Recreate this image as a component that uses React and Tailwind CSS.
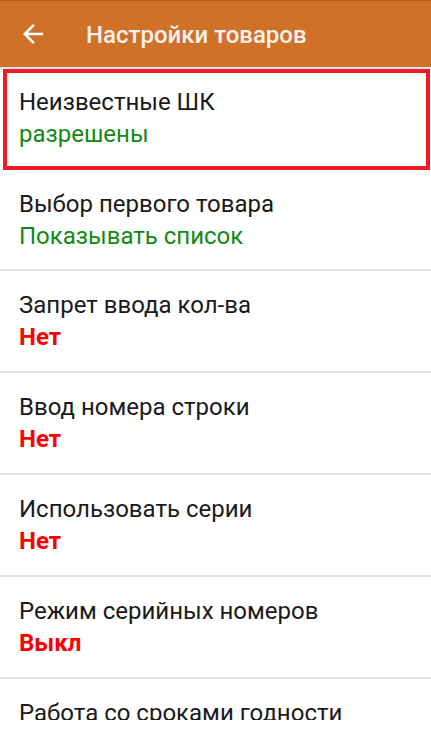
import React from 'react';

const settings = [
  { title: 'Неизвестные ШК', value: 'разрешены', tone: 'ok' },
  { title: 'Выбор первого товара', value: 'Показывать список', tone: 'ok' },
  { title: 'Запрет ввода кол-ва', value: 'Нет', tone: 'off' },
  { title: 'Ввод номера строки', value: 'Нет', tone: 'off' },
  { title: 'Использовать серии', value: 'Нет', tone: 'off' },
  { title: 'Режим серийных номеров', value: 'Выкл', tone: 'off' },
  { title: 'Работа со сроками годности' },
];

const toneClass = {
  ok: 'text-[#128a12] font-normal',
  off: 'text-[#ff0000] font-bold',
};

function ArrowBack() {
  return (
    <svg width="30" height="30" viewBox="0 0 24 24" fill="#ffffff">
      <path d="M20 11H7.83l5.59-5.59L12 4l-8 8 8 8 1.41-1.41L7.83 13H20v-2z" />
    </svg>
  );
}

function SettingText({ item }) {
  return (
    <div className="flex flex-col gap-1">
      <span className="text-[24px] leading-7 text-[#1a1a1a]">{item.title}</span>
      {item.value && (
        <span className={`text-[24px] leading-7 ${toneClass[item.tone]}`}>{item.value}</span>
      )}
    </div>
  );
}

export default function App() {
  const [first, ...rest] = settings;

  return (
    <div className="w-[431px] h-[740px] overflow-hidden bg-white font-['Roboto',sans-serif]">
      <header className="h-[67px] bg-[#d0712a] border-t border-[#b95d1c] flex items-center">
        <button className="w-[66px] h-full flex items-center pl-[18px]">
          <ArrowBack />
        </button>
        <h1 className="ml-[20px] pt-[2px] text-[24px] font-medium text-[#f7f1ec]">
          Настройки товаров
        </h1>
      </header>

      <div className="h-[653px] overflow-hidden">
        <div className="border-t-2 border-[#e4e4e4]">
          <div className="ml-[3px] mr-[1px] h-[101px] border-4 border-[#ee1c25] pl-[12px] pt-[15px]">
            <SettingText item={first} />
          </div>
        </div>

        {rest.map((item, i) => (
          <div
            key={item.title}
            className={`px-[19px] pt-[20px] ${i === 0 ? 'h-[101px]' : 'h-[102px]'} border-b-2 border-[#e4e4e4]`}
          >
            <SettingText item={item} />
          </div>
        ))}
      </div>
    </div>
  );
}
